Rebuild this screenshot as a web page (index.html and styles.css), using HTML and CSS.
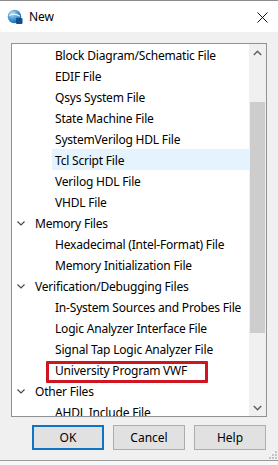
FILE: index.html
```html
<!DOCTYPE html>
<html>
<head>
<meta charset="utf-8">
<link rel="stylesheet" href="styles.css">
</head>
<body>
<div class="window">
  <div class="titlebar">
    <svg class="app-icon" width="16" height="16" viewBox="0 0 16 16">
      <defs>
        <radialGradient id="g" cx="0.35" cy="0.3" r="0.8">
          <stop offset="0" stop-color="#b9e0f7"/>
          <stop offset="0.55" stop-color="#3f94d2"/>
          <stop offset="1" stop-color="#175a9a"/>
        </radialGradient>
      </defs>
      <circle cx="7.5" cy="7.5" r="6.8" fill="url(#g)"/>
      <path d="M2.2 6.5 C5 4.5 9 4.8 12.8 7.2" stroke="#e8f5fc" stroke-width="1.3" fill="none"/>
      <rect x="9" y="9" width="6.5" height="6" rx="1" fill="#134f8c"/>
    </svg>
    <span class="title">New</span>
    <svg class="close" width="11" height="11" viewBox="0 0 11 11">
      <path d="M0.5 0.5 L10.5 10.5 M10.5 0.5 L0.5 10.5" stroke="#111" stroke-width="1" fill="none"/>
    </svg>
  </div>
  <div class="content">
    <div class="listbox">
      <div class="tree">
        <div class="row child">Block Diagram/Schematic File</div>
        <div class="row child">EDIF File</div>
        <div class="row child">Qsys System File</div>
        <div class="row child">State Machine File</div>
        <div class="row child">SystemVerilog HDL File</div>
        <div class="row child hover">Tcl Script File</div>
        <div class="row child">Verilog HDL File</div>
        <div class="row child">VHDL File</div>
        <div class="row parent"><svg class="chev" width="8" height="5" viewBox="0 0 8 5"><path d="M0.5 0.5 L4 4 L7.5 0.5" stroke="#444" stroke-width="1.1" fill="none"/></svg><span class="label">Memory Files</span></div>
        <div class="row child">Hexadecimal (Intel-Format) File</div>
        <div class="row child">Memory Initialization File</div>
        <div class="row parent"><svg class="chev" width="8" height="5" viewBox="0 0 8 5"><path d="M0.5 0.5 L4 4 L7.5 0.5" stroke="#444" stroke-width="1.1" fill="none"/></svg><span class="label">Verification/Debugging Files</span></div>
        <div class="row child">In-System Sources and Probes File</div>
        <div class="row child">Logic Analyzer Interface File</div>
        <div class="row child">Signal Tap Logic Analyzer File</div>
        <div class="row child marked">University Program VWF<span class="mark"></span></div>
        <div class="row parent"><svg class="chev" width="8" height="5" viewBox="0 0 8 5"><path d="M0.5 0.5 L4 4 L7.5 0.5" stroke="#444" stroke-width="1.1" fill="none"/></svg><span class="label">Other Files</span></div>
        <div class="row child">AHDL Include File</div>
      </div>
      <div class="scrollbar">
        <div class="sb-btn"><svg width="9" height="6" viewBox="0 0 9 6"><path d="M0.8 5 L4.5 1.3 L8.2 5" stroke="#606060" stroke-width="1.5" fill="none"/></svg></div>
        <div class="sb-track"><div class="sb-thumb"></div></div>
        <div class="sb-btn"><svg width="9" height="6" viewBox="0 0 9 6"><path d="M0.8 1 L4.5 4.7 L8.2 1" stroke="#606060" stroke-width="1.5" fill="none"/></svg></div>
      </div>
    </div>
    <div class="buttons">
      <div class="btn default">OK</div>
      <div class="btn">Cancel</div>
      <div class="btn">Help</div>
    </div>
    <svg class="grip" width="9" height="9" viewBox="0 0 9 9">
      <rect x="7" y="1" width="2" height="2" fill="#c4c4c4"/>
      <rect x="4" y="4" width="2" height="2" fill="#c4c4c4"/>
      <rect x="7" y="4" width="2" height="2" fill="#c4c4c4"/>
      <rect x="1" y="7" width="2" height="2" fill="#c4c4c4"/>
      <rect x="4" y="7" width="2" height="2" fill="#c4c4c4"/>
      <rect x="7" y="7" width="2" height="2" fill="#c4c4c4"/>
    </svg>
  </div>
</div>
</body>
</html>
```
FILE: styles.css
```css
html, body {
  margin: 0;
  padding: 0;
  background: #f7f7f7;
}
body {
  width: 278px;
  height: 465px;
  overflow: hidden;
  font-family: "Noto Sans", "Open Sans", sans-serif;
  font-size: 12px;
  color: #000;
}
.window {
  width: 278px;
  border-top: 1px solid #8c8c8c;
  border-bottom: 1px solid #9a9a9a;
  box-sizing: border-box;
  height: 461px;
  display: flex;
  flex-direction: column;
}
.titlebar {
  height: 31px;
  background: #fff;
  display: flex;
  align-items: center;
  padding-left: 7px;
  box-sizing: border-box;
}
.app-icon {
  display: block;
  margin-top: 1px;
}
.title {
  margin-left: 6px;
  font-size: 12px;
  line-height: 16px;
  letter-spacing: -0.1px;
}
.close {
  margin-left: auto;
  margin-right: 10px;
  display: block;
  margin-top: 1px;
}
.content {
  flex: 1;
  background: #f0f0f0;
  padding: 11px 11px 0 11px;
  position: relative;
}
.listbox {
  height: 374px;
  box-sizing: border-box;
  border: 1px solid #8f9398;
  background: #fff;
  display: flex;
}
.tree {
  flex: 1;
  overflow: hidden;
  height: 372px;
}
.row {
  height: 21px;
  line-height: 24px;
  white-space: nowrap;
  position: relative;
  letter-spacing: -0.2px;
}
.row.child {
  margin-left: 40px;
  padding-left: 3px;
}
.row.parent {
  padding-left: 5px;
  display: flex;
  align-items: flex-start;
}
.chev {
  display: block;
  margin-right: 10px;
  margin-top: 9px;
}
.label {
  display: block;
}
.row.hover {
  background: #e5f3ff;
}
.mark {
  position: absolute;
  left: -6px;
  top: 2px;
  width: 162px;
  height: 22px;
  box-sizing: border-box;
  border: 3px solid #cf1520;
  border-radius: 1px;
}
.scrollbar {
  width: 17px;
  background: #f0f0f0;
  display: flex;
  flex-direction: column;
}
.sb-btn {
  height: 17px;
  display: flex;
  align-items: center;
  justify-content: center;
}
.sb-btn svg {
  display: block;
}
.sb-track {
  flex: 1;
}
.sb-thumb {
  margin: 41px 1px 0 1px;
  height: 231px;
  background: #cdcdcd;
}
.buttons {
  display: flex;
  justify-content: flex-end;
  gap: 9px;
  margin-top: 8px;
  padding-right: 1px;
}
.btn {
  width: 72px;
  height: 25px;
  box-sizing: border-box;
  border: 1px solid #adadad;
  background: #e1e1e1;
  display: flex;
  align-items: center;
  justify-content: center;
  font-size: 12px;
}
.btn.default {
  border: 2px solid #0f74c4;
}
.grip {
  position: absolute;
  right: 1px;
  bottom: 1px;
  display: block;
}
```
